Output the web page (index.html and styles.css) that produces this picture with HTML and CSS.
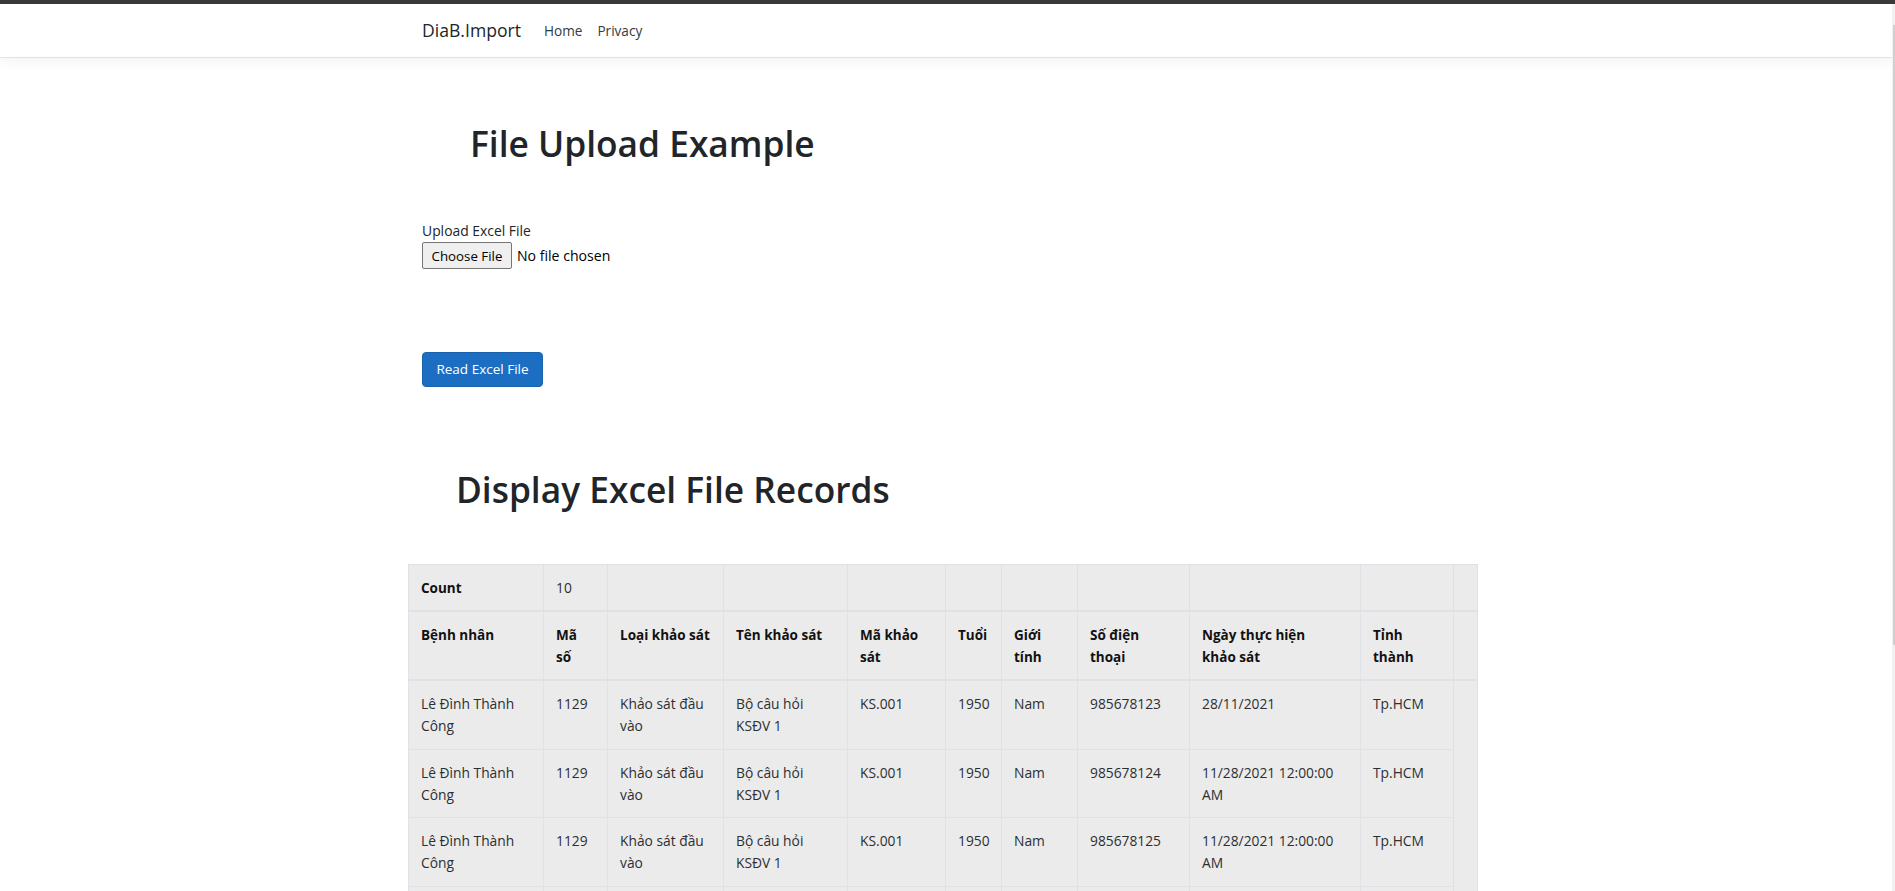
FILE: index.html
```html
<!DOCTYPE html>
<html lang="vi">
<head>
<meta charset="utf-8">
<title>DiaB.Import - File Upload Example</title>
<link rel="stylesheet" href="styles.css">
</head>
<body>
<div class="topbar"></div>
<header class="navbar">
  <div class="container nav-inner">
    <a class="brand" href="#">DiaB.Import</a>
    <nav class="nav-links">
      <a class="nav-link" href="#">Home</a>
      <a class="nav-link" href="#">Privacy</a>
    </nav>
  </div>
</header>

<main class="container">
  <h1 class="title title-upload">File Upload Example</h1>
  <form class="upload-form">
    <label class="field-label" for="excel-file">Upload Excel File</label>
    <label class="file-picker">
      <input class="file-input" type="file" id="excel-file">
      <span class="file-btn">Choose File</span>
      <span class="file-name">No file chosen</span>
    </label>
    <button class="btn-read" type="button">Read Excel File</button>
  </form>

  <h1 class="title title-records">Display Excel File Records</h1>

  <div class="table-wrap">
    <table class="records">
      <colgroup>
        <col class="c1"><col class="c2"><col class="c3"><col class="c4"><col class="c5"><col class="c6"><col class="c7"><col class="c8"><col class="c9"><col class="c10"><col class="c11">
      </colgroup>
      <thead>
        <tr class="row-count">
          <th>Count</th><td>10</td><td></td><td></td><td></td><td></td><td></td><td></td><td></td><td></td><td></td>
        </tr>
        <tr class="row-head">
          <th>Bệnh nhân</th><th>Mã số</th><th class="th-type">Loại khảo sát</th><th>Tên khảo sát</th><th>Mã khảo sát</th><th>Tuổi</th><th>Giới tính</th><th>Số điện thoại</th><th class="th-date">Ngày thực hiện khảo sát</th><th>Tỉnh thành</th><th></th>
        </tr>
      </thead>
      <tbody>
        <tr><td>Lê Đình Thành Công</td><td>1129</td><td>Khảo sát đầu vào</td><td>Bộ câu hỏi KSĐV 1</td><td>KS.001</td><td>1950</td><td>Nam</td><td>985678123</td><td>28/11/2021</td><td>Tp.HCM</td></tr>
        <tr><td>Lê Đình Thành Công</td><td>1129</td><td>Khảo sát đầu vào</td><td>Bộ câu hỏi KSĐV 1</td><td>KS.001</td><td>1950</td><td>Nam</td><td>985678124</td><td>11/28/2021 12:00:00 AM</td><td>Tp.HCM</td></tr>
        <tr><td>Lê Đình Thành Công</td><td>1129</td><td>Khảo sát đầu vào</td><td>Bộ câu hỏi KSĐV 1</td><td>KS.001</td><td>1950</td><td>Nam</td><td>985678125</td><td>11/28/2021 12:00:00 AM</td><td>Tp.HCM</td></tr>
        <tr><td>Lê Đình Thành Công</td><td>1129</td><td>Khảo sát đầu vào</td><td>Bộ câu hỏi KSĐV 1</td><td>KS.001</td><td>1950</td><td>Nam</td><td>985678126</td><td>11/28/2021 12:00:00 AM</td><td>Tp.HCM</td></tr>
        <tr><td>Lê Đình Thành Công</td><td>1129</td><td>Khảo sát đầu vào</td><td>Bộ câu hỏi KSĐV 1</td><td>KS.001</td><td>1950</td><td>Nam</td><td>985678127</td><td>11/28/2021 12:00:00 AM</td><td>Tp.HCM</td></tr>
        <tr><td>Lê Đình Thành Công</td><td>1129</td><td>Khảo sát đầu vào</td><td>Bộ câu hỏi KSĐV 1</td><td>KS.001</td><td>1950</td><td>Nam</td><td>985678128</td><td>11/28/2021 12:00:00 AM</td><td>Tp.HCM</td></tr>
        <tr><td>Lê Đình Thành Công</td><td>1129</td><td>Khảo sát đầu vào</td><td>Bộ câu hỏi KSĐV 1</td><td>KS.001</td><td>1950</td><td>Nam</td><td>985678129</td><td>11/28/2021 12:00:00 AM</td><td>Tp.HCM</td></tr>
        <tr><td>Lê Đình Thành Công</td><td>1129</td><td>Khảo sát đầu vào</td><td>Bộ câu hỏi KSĐV 1</td><td>KS.001</td><td>1950</td><td>Nam</td><td>985678130</td><td>11/28/2021 12:00:00 AM</td><td>Tp.HCM</td></tr>
        <tr><td>Lê Đình Thành Công</td><td>1129</td><td>Khảo sát đầu vào</td><td>Bộ câu hỏi KSĐV 1</td><td>KS.001</td><td>1950</td><td>Nam</td><td>985678131</td><td>11/28/2021 12:00:00 AM</td><td>Tp.HCM</td></tr>
        <tr><td>Lê Đình Thành Công</td><td>1129</td><td>Khảo sát đầu vào</td><td>Bộ câu hỏi KSĐV 1</td><td>KS.001</td><td>1950</td><td>Nam</td><td>985678132</td><td>11/28/2021 12:00:00 AM</td><td>Tp.HCM</td></tr>
      </tbody>
    </table>
  </div>
</main>

<div class="scrollbar"><div class="scroll-thumb"></div></div>
</body>
</html>
```

FILE: styles.css
```css
html {
  overflow: hidden;
}

body {
  margin: 0;
  font-family: "Open Sans", "Noto Sans", sans-serif;
  font-size: 13.8px;
  color: #212529;
  background: #ffffff;
}

.topbar {
  height: 4px;
  background: #3a3a3a;
}

.container {
  width: 1051px;
  margin: 0 auto;
}

/* ---------- navbar ---------- */
.navbar {
  height: 53px;
  background: #ffffff;
  border-bottom: 1px solid #e3e3e3;
  box-shadow: 0 4px 12px rgba(0, 0, 0, 0.05);
  position: relative;
}

.nav-inner {
  height: 100%;
  display: flex;
  align-items: center;
}

.brand {
  font-size: 17.6px;
  line-height: 27px;
  color: #212529;
  text-decoration: none;
}

.nav-links {
  display: flex;
  margin-left: 23px;
  gap: 15px;
}

.nav-link {
  font-size: 13.6px;
  line-height: 20px;
  color: #343a40;
  text-decoration: none;
}

/* ---------- headings ---------- */
.title {
  margin: 0;
  font-size: 35.3px;
  line-height: 48px;
  font-weight: 600;
  color: #212529;
}

.title-upload {
  margin-top: 61px;
  padding-left: 48px;
}

.title-records {
  margin-top: 78px;
  padding-left: 34px;
}

/* ---------- upload form ---------- */
.upload-form {
  display: flex;
  flex-direction: column;
  align-items: flex-start;
}

.field-label {
  display: block;
  margin-top: 53px;
  line-height: 21px;
  font-size: 13.9px;
  color: #212529;
}

.file-picker {
  display: flex;
  align-items: center;
  height: 27px;
  margin-top: 1px;
  cursor: pointer;
}

.file-input {
  display: none;
}

.file-btn {
  box-sizing: border-box;
  width: 90px;
  height: 27px;
  display: flex;
  align-items: center;
  justify-content: center;
  background: #efefef;
  border: 1px solid #767676;
  border-radius: 2px;
  color: #000000;
  font-size: 13.3px;
}

.file-name {
  margin-left: 5px;
  font-size: 14.1px;
  color: #000000;
}

.btn-read {
  box-sizing: border-box;
  margin-top: 83px;
  width: 121px;
  height: 35px;
  padding: 0;
  background: #1b6ec2;
  border: 1px solid #1861ac;
  border-radius: 4px;
  color: #ffffff;
  font-family: inherit;
  font-size: 13.5px;
  line-height: 21px;
}

/* ---------- table ---------- */
.table-wrap {
  margin-top: 51px;
  margin-left: -14px;
}

.records {
  width: 1069px;
  table-layout: fixed;
  border-collapse: collapse;
  background: #ebebeb;
  border: 1px solid #dee2e6;
}

.c1 { width: 135px; }
.c2 { width: 64px; }
.c3 { width: 116px; }
.c4 { width: 124px; }
.c5 { width: 98px; }
.c6 { width: 56px; }
.c7 { width: 76px; }
.c8 { width: 112px; }
.c9 { width: 171px; }
.c10 { width: 93px; }
.c11 { width: 24px; }

.records th,
.records td {
  padding: 12px 12px 11.5px 12px;
  border: 1px solid #dee2e6;
  text-align: left;
  vertical-align: top;
  line-height: 22px;
  font-size: 13.8px;
}

.records th {
  font-weight: 700;
  font-size: 13.5px;
  color: #111111;
}

.records .th-type {
  padding-right: 6px;
}

.records .th-date {
  padding-right: 26px;
}

.records td {
  color: #2b2f33;
}

.row-count th,
.row-count td,
.row-head th {
  padding-bottom: 11px;
  border-bottom: 2px solid #dee2e6;
}

/* ---------- scrollbar remnant at the right edge ---------- */
.scrollbar {
  position: fixed;
  top: 4px;
  right: 0;
  bottom: 0;
  width: 3px;
  background: #f1f1f1;
}

.scroll-thumb {
  margin-top: 21px;
  height: 620px;
  width: 2px;
  margin-left: 1px;
  background: #cfcfcf;
}
```
